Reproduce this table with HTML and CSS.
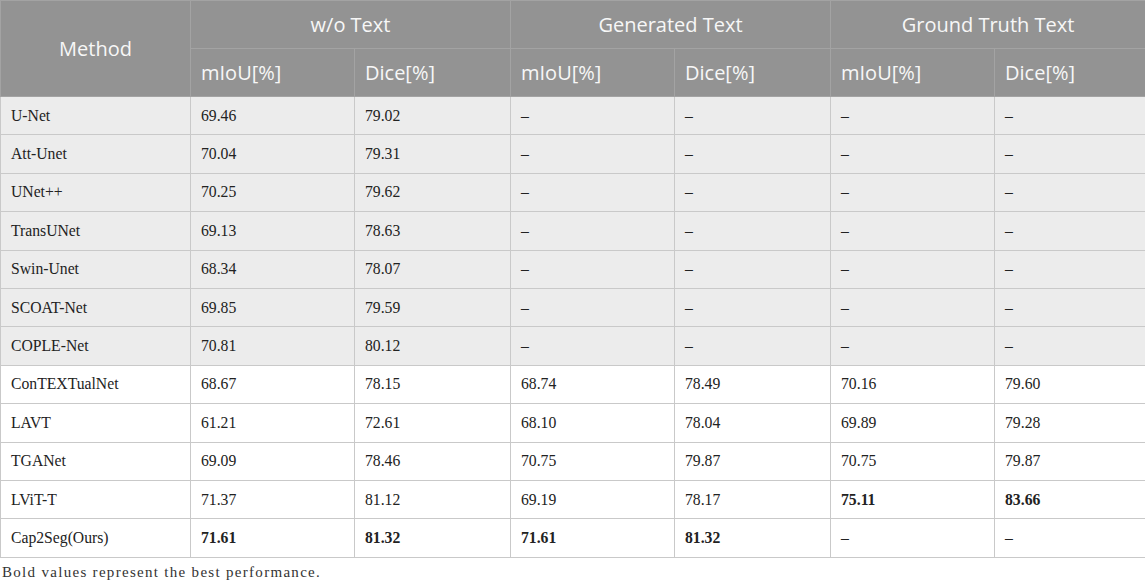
FILE: index.html
```html
<!DOCTYPE html>
<html>
<head>
<meta charset="utf-8">
<link rel="stylesheet" href="styles.css">
</head>
<body>
<table class="results">
  <colgroup>
    <col class="c-method"><col class="c1"><col class="c2"><col class="c3"><col class="c4"><col class="c5"><col class="c6">
  </colgroup>
  <thead>
    <tr class="h1">
      <th rowspan="2" class="center">Method</th>
      <th colspan="2" class="center">w/o Text</th>
      <th colspan="2" class="center">Generated Text</th>
      <th colspan="2" class="center">Ground Truth Text</th>
    </tr>
    <tr class="h2">
      <th>mIoU[%]</th><th>Dice[%]</th>
      <th>mIoU[%]</th><th>Dice[%]</th>
      <th>mIoU[%]</th><th>Dice[%]</th>
    </tr>
  </thead>
  <tbody>
    <tr class="shade"><td>U-Net</td><td>69.46</td><td>79.02</td><td>–</td><td>–</td><td>–</td><td>–</td></tr>
    <tr class="shade"><td>Att-Unet</td><td>70.04</td><td>79.31</td><td>–</td><td>–</td><td>–</td><td>–</td></tr>
    <tr class="shade"><td>UNet++</td><td>70.25</td><td>79.62</td><td>–</td><td>–</td><td>–</td><td>–</td></tr>
    <tr class="shade"><td>TransUNet</td><td>69.13</td><td>78.63</td><td>–</td><td>–</td><td>–</td><td>–</td></tr>
    <tr class="shade"><td>Swin-Unet</td><td>68.34</td><td>78.07</td><td>–</td><td>–</td><td>–</td><td>–</td></tr>
    <tr class="shade"><td>SCOAT-Net</td><td>69.85</td><td>79.59</td><td>–</td><td>–</td><td>–</td><td>–</td></tr>
    <tr class="shade"><td>COPLE-Net</td><td>70.81</td><td>80.12</td><td>–</td><td>–</td><td>–</td><td>–</td></tr>
    <tr><td>ConTEXTualNet</td><td>68.67</td><td>78.15</td><td>68.74</td><td>78.49</td><td>70.16</td><td>79.60</td></tr>
    <tr><td>LAVT</td><td>61.21</td><td>72.61</td><td>68.10</td><td>78.04</td><td>69.89</td><td>79.28</td></tr>
    <tr><td>TGANet</td><td>69.09</td><td>78.46</td><td>70.75</td><td>79.87</td><td>70.75</td><td>79.87</td></tr>
    <tr><td>LViT-T</td><td>71.37</td><td>81.12</td><td>69.19</td><td>78.17</td><td class="b">75.11</td><td class="b">83.66</td></tr>
    <tr><td>Cap2Seg(Ours)</td><td class="b">71.61</td><td class="b">81.32</td><td class="b">71.61</td><td class="b">81.32</td><td>–</td><td>–</td></tr>
  </tbody>
</table>
<p class="note">Bold values represent the best performance.</p>
</body>
</html>
```

FILE: styles.css
```css
html, body {
  margin: 0;
  padding: 0;
  background: #ffffff;
}
.results {
  width: 1145px;
  border-collapse: collapse;
  table-layout: fixed;
  font-family: "Liberation Serif", "Times New Roman", serif;
  color: #222;
}
.c-method { width: 190px; }
.c1 { width: 164px; }
.c2 { width: 156px; }
.c3 { width: 164px; }
.c4 { width: 156px; }
.c5 { width: 164px; }
.c6 { width: 151px; }
.results th, .results td {
  border: 1px solid #c9c9c9;
  text-align: left;
  padding: 0 10px;
  vertical-align: middle;
}
.results th {
  background: #939393;
  color: #f7f7f7;
  font-family: "Open Sans", "Noto Sans", sans-serif;
  font-weight: 400;
  font-size: 20px;
  border-color: #a3a3a3;
}
.results th.center { text-align: center; }
.h1 th { height: 47px; }
.h2 th { height: 47px; }
.results td {
  height: 37.4px;
  font-size: 15.7px;
}
.results tr.shade td { background: #ececec; }
.results td.b { font-weight: 700; }
.note {
  margin: 6px 0 0 2px;
  font-family: "Liberation Serif", "Times New Roman", serif;
  font-size: 15px;
  letter-spacing: 1.3px;
  color: #333;
}
```
